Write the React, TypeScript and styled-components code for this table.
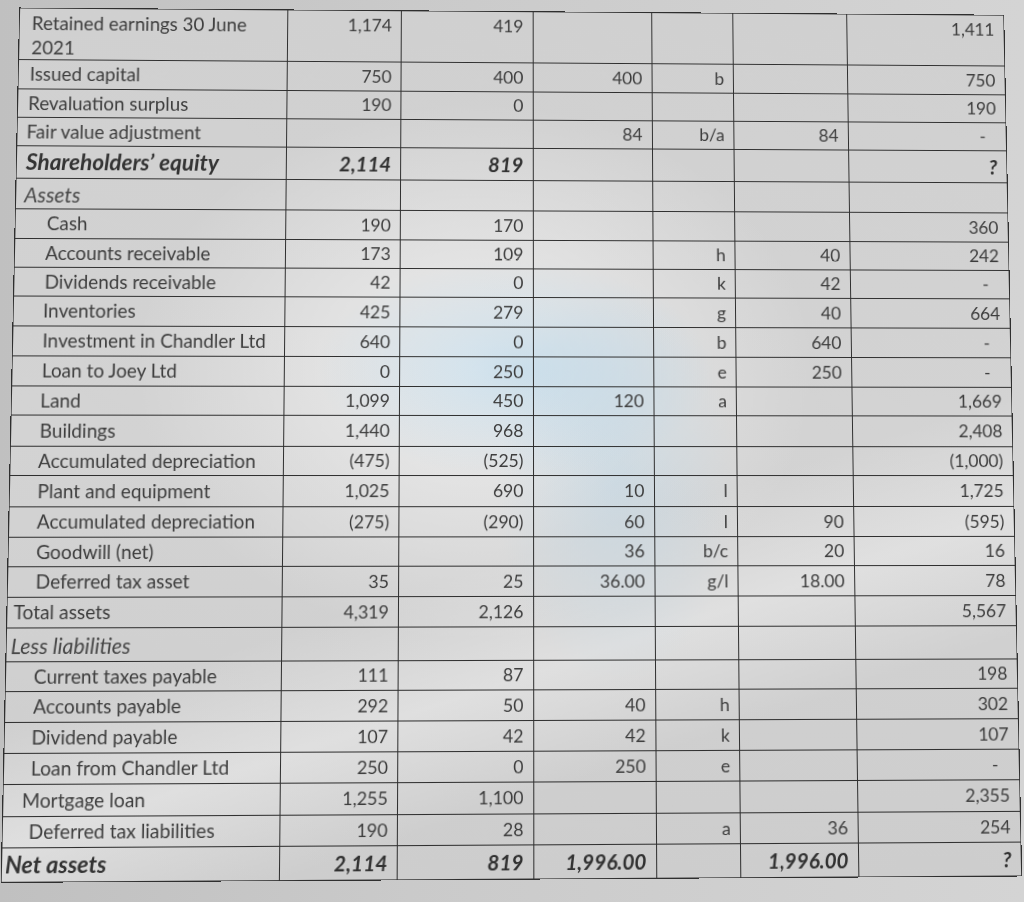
import React from "react";
import styled, { createGlobalStyle, css } from "styled-components";

const GlobalStyle = createGlobalStyle`
  html, body {
    margin: 0;
    padding: 0;
    background: #c9c9c9;
    overflow: hidden;
  }
  body {
    font-family: Lato, "Open Sans", "DejaVu Sans", sans-serif;
    color: #3e3e3e;
  }
`;

type Kind = "plain" | "head" | "section";
type Row = {
  label: React.ReactNode;
  indent: number;
  kind?: Kind;
  cells: string[];
  top?: boolean;
};

const ROW_HEIGHTS = [
  53, 30, 29, 29, 33, 31, 30, 29, 29, 30, 30, 30, 29, 31, 29, 31, 30, 29, 30,
  30, 33, 29, 30, 30, 30, 31, 30, 33,
];

const rows: Row[] = [
  {
    label: (
      <>
        Retained earnings 30 June
        <br />
        2021
      </>
    ),
    indent: 12,
    top: true,
    cells: ["1,174", "419", "", "", "", "1,411"],
  },
  { label: "Issued capital", indent: 11, cells: ["750", "400", "400", "b", "", "750"] },
  { label: "Revaluation surplus", indent: 10, cells: ["190", "0", "", "", "", "190"] },
  { label: "Fair value adjustment", indent: 9, cells: ["", "", "84", "b/a", "84", "-"] },
  {
    label: "Shareholders’ equity",
    indent: 9,
    kind: "head",
    cells: ["2,114", "819", "", "", "", "?"],
  },
  { label: "Assets", indent: 8, kind: "section", cells: ["", "", "", "", "", ""] },
  { label: "Cash", indent: 31, cells: ["190", "170", "", "", "", "360"] },
  { label: "Accounts receivable", indent: 30, cells: ["173", "109", "", "h", "40", "242"] },
  { label: "Dividends receivable", indent: 30, cells: ["42", "0", "", "k", "42", "-"] },
  { label: "Inventories", indent: 29, cells: ["425", "279", "", "g", "40", "664"] },
  {
    label: "Investment in Chandler Ltd",
    indent: 29,
    cells: ["640", "0", "", "b", "640", "-"],
  },
  { label: "Loan to Joey Ltd", indent: 29, cells: ["0", "250", "", "e", "250", "-"] },
  { label: "Land", indent: 28, cells: ["1,099", "450", "120", "a", "", "1,669"] },
  { label: "Buildings", indent: 28, cells: ["1,440", "968", "", "", "", "2,408"] },
  {
    label: "Accumulated depreciation",
    indent: 27,
    cells: ["(475)", "(525)", "", "", "", "(1,000)"],
  },
  {
    label: "Plant and equipment",
    indent: 27,
    cells: ["1,025", "690", "10", "l", "", "1,725"],
  },
  {
    label: "Accumulated depreciation",
    indent: 27,
    cells: ["(275)", "(290)", "60", "l", "90", "(595)"],
  },
  { label: "Goodwill (net)", indent: 27, cells: ["", "", "36", "b/c", "20", "16"] },
  {
    label: "Deferred tax asset",
    indent: 27,
    cells: ["35", "25", "36.00", "g/l", "18.00", "78"],
  },
  { label: "Total assets", indent: 6, cells: ["4,319", "2,126", "", "", "", "5,567"] },
  { label: "Less liabilities", indent: 4, kind: "section", cells: ["", "", "", "", "", ""] },
  {
    label: "Current taxes payable",
    indent: 27,
    cells: ["111", "87", "", "", "", "198"],
  },
  { label: "Accounts payable", indent: 27, cells: ["292", "50", "40", "h", "", "302"] },
  { label: "Dividend payable", indent: 26, cells: ["107", "42", "42", "k", "", "107"] },
  {
    label: "Loan from Chandler Ltd",
    indent: 26,
    cells: ["250", "0", "250", "e", "", "-"],
  },
  { label: "Mortgage loan", indent: 18, cells: ["1,255", "1,100", "", "", "", "2,355"] },
  {
    label: "Deferred tax liabilities",
    indent: 25,
    cells: ["190", "28", "", "a", "36", "254"],
  },
  {
    label: "Net assets",
    indent: 3,
    kind: "head",
    cells: ["2,114", "819", "1,996.00", "", "1,996.00", "?"],
  },
];

const LINE = "#2f2f2f";

const Page = styled.div`
  width: 1024px;
  height: 902px;
  overflow: hidden;
  padding: 3px 0 0 14px;
  box-sizing: border-box;
  background: linear-gradient(90deg, #c0c0c0 0%, #cacaca 40%, #d4d4d4 100%);
`;

const Sheet = styled.div`
  display: grid;
  grid-template-columns: 269.5px 115.5px 133.5px 121px 83.5px 116.5px 162px;
  grid-template-rows: ${ROW_HEIGHTS.map((h) => `${h}px`).join(" ")};
  width: max-content;
  border-top: 1.5px solid ${LINE};
  border-left: 1.5px solid ${LINE};
  background:
    radial-gradient(
      ellipse 200px 110px at 50% 42%,
      rgba(165, 208, 235, 0.45),
      rgba(165, 208, 235, 0) 100%
    ),
    radial-gradient(
      ellipse 120px 200px at 60% 55%,
      rgba(165, 208, 235, 0.3),
      rgba(165, 208, 235, 0) 100%
    ),
    radial-gradient(
      ellipse 340px 270px at 46% 42%,
      rgba(238, 238, 238, 1),
      rgba(238, 238, 238, 0) 100%
    ),
    linear-gradient(
      162deg,
      rgba(230, 230, 230, 0) 60%,
      rgba(230, 230, 230, 0.7) 70%,
      rgba(230, 230, 230, 0) 80%
    ),
    linear-gradient(180deg, #d0d0d0 0%, #d3d3d3 50%, #cdcdcd 100%);
  transform: perspective(1000px) rotateX(2.4deg) rotateY(0.9deg);
  transform-origin: 50% 50%;
`;

const labelStyle = {
  plain: css`
    font-weight: 400;
    font-style: normal;
    font-size: 18.8px;
    color: #3d3d3d;
  `,
  head: css`
    font-weight: 700;
    font-style: italic;
    font-size: 22.5px;
    color: #333333;
  `,
  section: css`
    font-weight: 400;
    font-style: italic;
    font-size: 21px;
    color: #474747;
  `,
};

const valueStyle = {
  plain: css`
    font-weight: 400;
    font-style: normal;
    font-size: 17.6px;
    color: #3d3d3d;
  `,
  head: css`
    font-weight: 700;
    font-style: italic;
    font-size: 20.5px;
    color: #313131;
  `,
  section: css`
    font-weight: 400;
    font-size: 17.6px;
  `,
};

const CellBase = styled.div`
  box-sizing: border-box;
  border-right: 1.5px solid ${LINE};
  border-bottom: 1.5px solid ${LINE};
  display: flex;
  white-space: nowrap;
  min-width: 0;
`;

const LabelCell = styled(CellBase)<{ $indent: number; $kind: Kind; $top?: boolean }>`
  align-items: ${(p) => (p.$top ? "flex-start" : "center")};
  padding: ${(p) => (p.$top ? "2px" : "0")} 4px 0 ${(p) => p.$indent}px;
  line-height: ${(p) => (p.$top ? "25px" : "1")};
  ${(p) => labelStyle[p.$kind]}
`;

const ValueCell = styled(CellBase)<{ $kind: Kind; $top?: boolean; $dash?: boolean }>`
  justify-content: flex-end;
  align-items: ${(p) => (p.$top ? "flex-start" : "center")};
  padding: ${(p) => (p.$top ? "4px" : "0")} ${(p) => (p.$dash ? "20px" : "9px")} 0 0;
  line-height: 1.2;
  ${(p) => valueStyle[p.$kind]}
`;

export default function App() {
  return (
    <>
      <GlobalStyle />
      <Page>
        <Sheet>
          {rows.map((r, i) => (
            <React.Fragment key={i}>
              <LabelCell $indent={r.indent} $kind={r.kind ?? "plain"} $top={r.top}>
                <span>{r.label}</span>
              </LabelCell>
              {r.cells.map((c, j) => (
                <ValueCell
                  key={j}
                  $kind={r.kind ?? "plain"}
                  $top={r.top}
                  $dash={c === "-"}
                >
                  {c}
                </ValueCell>
              ))}
            </React.Fragment>
          ))}
        </Sheet>
      </Page>
    </>
  );
}
